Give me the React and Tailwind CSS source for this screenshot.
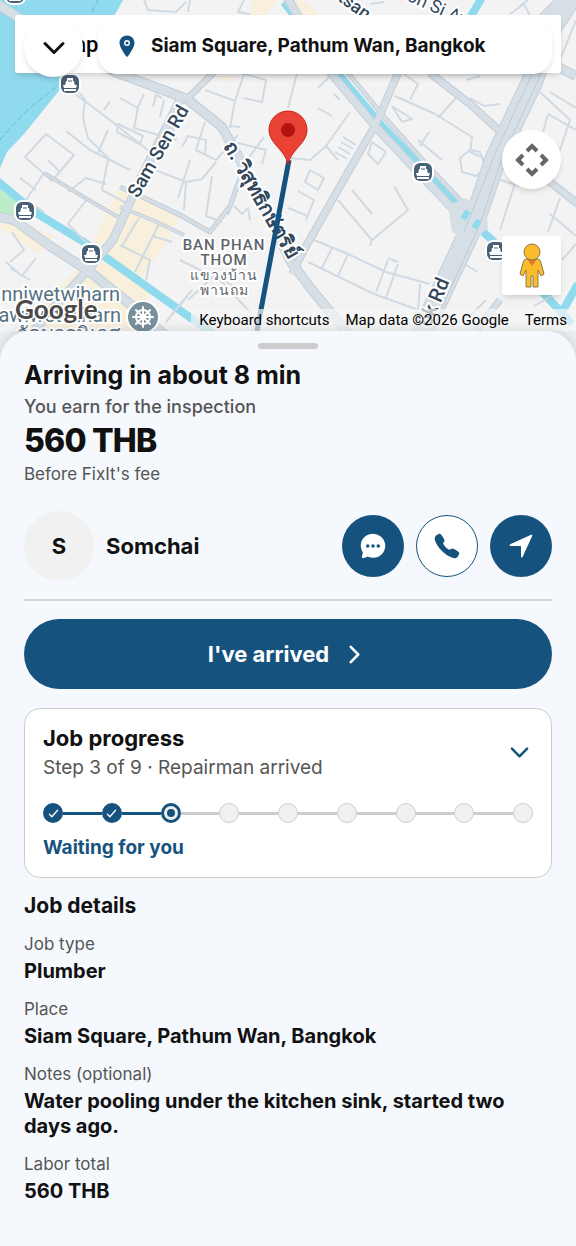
import {
    IoCall,
    IoChatbubbleEllipses,
    IoCheckmark,
    IoChevronDown,
    IoChevronForward,
    IoLocation,
    IoNavigate,
} from "react-icons/io5";

const TOTAL_STEPS = 9;
const CURRENT_STEP = 3;

const DETAILS = [
    { label: "Job type", value: "Plumber" },
    { label: "Place", value: "Siam Square, Pathum Wan, Bangkok" },
    { label: "Notes (optional)", value: "Water pooling under the kitchen sink, started two days ago." },
    { label: "Labor total", value: "560 THB" },
];

// Main roads, drawn as a casing plus a fill
const ROADS = [
    { d: "M-6 2 L30 25 L115 72 L187 99 L222 127 L243 165 L291 262 L312 290 L350 336", w: 9 },
    { d: "M187 99 L216 70", w: 6 },
    { d: "M180 100 L140 180 L113 240 L86 272 L55 306 L30 336", w: 8 },
    { d: "M120 187 L140 196 L180 215 L210 232 L230 206 L240 178", w: 4 },
    { d: "M44 173 L87 199 L120 218 M120 207 L150 219 L184 235", w: 3 },
    { d: "M-4 216 L14 220 L50 246 L90 272 L130 304 L166 336", w: 9 },
    { d: "M284 -8 L331 73 L375 126 L416 170 L456 212", w: 8 },
    { d: "M348 73 L385 118 L428 166 L464 204", w: 4 },
    { d: "M398 73 L376 124 L351 167 L305 248 L292 274", w: 7 },
    { d: "M430 73 L470 104 L502 133", w: 7 },
    { d: "M548 62 L576 76", w: 9 },
    { d: "M545 178 L578 204", w: 7 },
    { d: "M576 -10 L552 26 L532 82 L496 158 L474 222 L430 316 L420 340", w: 21 },
    { d: "M560 0 L530 30", w: 8 },
    { d: "M500 300 L476 331", w: 6 },
];

const SMALL_ROADS = [
    "M70 90 L110 120 L150 152 L148 175 M76 88 L85 100 L83 118 L88 138 L110 160",
    "M46 134 L25 157 L52 181 L74 155 Z M66 131 L90 150 L130 170 M108 130 L98 153",
    "M118 124 L143 136 L140 144 L117 132 Z M120 98 L138 108 L134 128 L176 140",
    "M137 109 L144 94 M153 107 L156 95 L162 98 M160 117 L164 100 M104 110 L110 101",
    "M182 147 L188 136 L206 140 L205 155 M205 122 L196 150 L216 160 L238 135",
    "M205 90 L235 101 L230 128 M235 101 L244 74 L266 80 L262 102 L244 98 M229 126 L240 127",
    "M238 143 L266 150 L262 164 M264 137 L240 170 M170 118 L176 140 M190 160 L178 198",
    "M44 173 L26 200 L44 212 M20 178 L36 190 M48 160 L60 172 M290 158 L310 160 L326 146",
    "M87 199 L68 224 L88 244 M68 192 L86 178 L106 184 M108 160 L102 190 L130 205",
    "M155 170 L186 182 L202 179 L216 162 M186 182 L184 210 M212 176 L206 216 L222 222",
    "M120 245 L150 260 L146 280 M139 218 L122 246 M160 222 L135 272 M152 236 L172 242",
    "M234 206 L242 214 L248 208 L250 220 M258 186 L272 196 M240 182 L228 215",
    "M180 260 L220 280 L250 312 M188 300 L215 275 L240 290",
    "M12 232 L24 250 L10 262 M36 258 L22 276 L6 262 M10 268 L30 280 M166 322 L192 290",
    "M144 0 L148 10 L176 12 L186 2 M190 0 L188 12 M300 62 L288 108 M244 0 L238 12 L250 14",
    "M330 76 L318 88 M340 100 L334 94 M350 112 L326 146 L338 160 M318 108 L332 116",
    "M343 137 L356 145 M341 142 L353 149 M338 147 L350 154 M335 152 L347 159",
    "M372 142 L386 152 L378 164 L368 154 Z M395 96 L435 114 L472 137 L470 152 L484 158",
    "M404 74 L418 84 L410 100 M438 118 L456 98 M418 140 L442 160 M429 132 L420 146",
    "M392 106 L412 119 L402 122 Z M470 150 L460 158 L462 172 L476 176 L486 168 L480 152 Z",
    "M470 98 L484 106 L500 104 M466 80 L480 76 M520 132 L560 150 L570 120 L540 92",
    "M550 92 L576 108 M548 114 L576 130 M548 114 L542 136 M516 180 L500 230 M500 180 L520 186",
    "M310 170 L324 178 L318 190 L305 182 Z M298 191 L314 200 L306 220 M288 208 L308 216",
    "M338 200 L372 240 L408 210 L394 186 M352 190 L372 214 M372 238 L370 246",
    "M314 240 L348 254 L386 272 L430 284 M308 262 L374 294 L424 312 M348 254 L338 276",
    "M388 260 L376 292 M398 264 L386 298 M388 258 L398 262 M332 248 L322 268 M420 284 L418 310",
    "M550 214 L576 236 M560 198 L548 232 M464 264 L478 272",
    "M486 300 L470 316 M534 306 L552 296 M562 260 L576 244 M576 20 L560 60",
    "M510 14 L524 4 L530 16 M528 0 L520 6 M370 4 L384 2",
];

const PIERS = [
    [15, -6],
    [70, 84],
    [25, 211],
    [91, 254],
    [423, 172],
    [496, 251],
];

function PierMark({ x, y }) {
    return (
        <g transform={`translate(${x} ${y})`}>
            <rect x="-11" y="-11" width="22" height="22" rx="8" fill="#fff" />
            <rect x="-9" y="-9" width="18" height="18" rx="6" fill="#486076" />
            <path
                d="M-3 -6 H3 V-3 H4 L5 2 H-5 L-4 -3 H-3 Z M-7 1 H7 L6 4 H-6 Z M-6 5 H6 V7 H-6 Z"
                fill="#fff"
            />
            <path d="M-2 -3 H2" stroke="#486076" strokeWidth="1" />
        </g>
    );
}

function MapCanvas() {
    return (
        <svg
            viewBox="0 0 576 331"
            preserveAspectRatio="xMidYMid slice"
            className="block h-full w-full"
            role="img"
            aria-label="Map"
        >
            <rect width="576" height="331" fill="#f4f3f4" />

            {/* commercial blocks */}
            <g fill="#f8f0dc">
                <path d="M118 189 L181 215 L162 250 L140 277 L106 255 L92 245 Z" />
                <path d="M0 220 L18 222 L54 236 L40 254 L0 228 Z" />
                <path d="M80 266 L108 262 L152 290 L140 310 L160 331 L20 331 L58 288 Z" />
                <path d="M252 0 L278 0 L262 20 L250 14 Z M288 0 L306 2 L318 14 L308 24 L290 10 Z" />
                <path d="M216 76 L236 76 L226 82 Z" />
            </g>
            <path d="M0 188 L19 204 L13 216 L0 214 Z" fill="#bdeccb" />

            {/* river and canals */}
            <path d="M0 0 H123 L112 20 L58 92 L24 134 L7 152 L0 168 Z" fill="#90daee" />
            <path d="M0 140 Q24 110 58 86 M92 12 L98 0" fill="none" stroke="#50bfdf" strokeDasharray="6 3" />
            <g fill="none" stroke="#90daee" strokeWidth="8">
                <path d="M-4 180 L36 213 L84 242 L108 259 L188 316 L214 334" />
                <path d="M284 2 L340 76 L382 126 L424 170 L464 214 L492 240 L548 298 L572 324" />
                <path d="M484 -6 L470 18 M578 284 L562 312" />
            </g>

            {/* side streets */}
            <g fill="none" stroke="#d0dae3" strokeWidth="2" strokeLinejoin="round">
                {SMALL_ROADS.map((d) => (
                    <path key={d} d={d} />
                ))}
            </g>

            {/* main roads */}
            <g fill="none" stroke="#c3ced8" strokeLinejoin="round">
                {ROADS.map((road) => (
                    <path key={road.d} d={road.d} strokeWidth={road.w + 1} />
                ))}
            </g>
            <g fill="none" stroke="#d6dfe6" strokeLinejoin="round">
                {ROADS.map((road) => (
                    <path key={road.d} d={road.d} strokeWidth={road.w - 1} />
                ))}
            </g>
            <path d="M448 206 L464 198 L486 206 L488 228 L472 242 L452 232 Z" fill="#d6dfe6" />
            <path d="M541 74 L502 158 L480 224 L437 318 M532 74 L495 154 L464 232" fill="none" stroke="#bfcbd6" />
            <path d="M463 219 L468 211 M474 228 L479 220" stroke="#90daee" strokeWidth="6" />

            {PIERS.map(([x, y]) => (
                <PierMark key={`${x}-${y}`} x={x} y={y} />
            ))}

            {/* labels */}
            <g
                className="font-['Roboto','Noto_Sans',sans-serif]"
                stroke="#fff"
                strokeWidth="4"
                strokeLinejoin="round"
                paintOrder="stroke"
            >
                <g fill="#33475b" fontSize="18" fontWeight="500">
                    <text transform="translate(138 199) rotate(-60)" fontSize="19">Sam Sen Rd</text>
                    <text transform="translate(223 146) rotate(60)" fontSize="20" fontWeight="700">
                        ถ. วิสุทธิกษัตริย์
                    </text>
                    <text transform="translate(430 328) rotate(-67)" fontSize="20">ok Rd</text>
                    <text transform="translate(337 0) rotate(36)">tsan</text>
                    <text transform="translate(406 0) rotate(24)" fontWeight="400">on Si Ayu</text>
                </g>
                <g fill="#5d656c" fontSize="14" fontWeight="500" textAnchor="middle" letterSpacing="1">
                    <text x="224" y="250" fontSize="15">BAN PHAN</text>
                    <text x="224" y="265" fontSize="15">THOM</text>
                    <text x="224" y="280">แขวงบ้าน</text>
                    <text x="224" y="295">พานถม</text>
                </g>
                <g fill="#587183" fontSize="20" textAnchor="end">
                    <text x="120" y="301">nniwetwiharn</text>
                    <text x="121" y="322">hawiwetwiharn</text>
                    <text x="121" y="341">วัดบวรนิเวศ</text>
                </g>
            </g>

            {/* temple */}
            <g transform="translate(143 317)">
                <circle r="17" fill="#fff" />
                <circle r="15" fill="#78909c" />
                <g fill="none" stroke="#fff" strokeWidth="2">
                    <circle r="7" />
                    <circle r="2" fill="#fff" />
                    <path d="M0 -10 V10 M-10 0 H10 M-7 -7 L7 7 M7 -7 L-7 7" strokeLinecap="round" />
                </g>
            </g>

            <text
                x="15"
                y="319"
                fontSize="26"
                fontWeight="700"
                fill="#4a4a4a"
                stroke="#fff"
                strokeWidth="3"
                paintOrder="stroke"
                className="font-['Lato',sans-serif]"
            >
                Google
            </text>

            {/* route and destination */}
            <path d="M289 160 L257 331" stroke="#15537e" strokeWidth="5" />
            <path
                d="M288 165 C286 150 269 144 269 130 A19 19 0 0 1 307 130 C307 144 290 150 288 165 Z"
                fill="#ea4335"
                stroke="#c5221f"
            />
            <circle cx="288" cy="130" r="7" fill="#b31412" />
        </svg>
    );
}

function JobMap() {
    return (
        <section className="relative h-[331px] overflow-hidden">
            <MapCanvas />

            <div className="absolute inset-x-[15px] top-[15px] flex h-[58px] items-center rounded-xs bg-white pl-10 font-['Roboto',sans-serif] text-[22px] font-medium text-black shadow-md">
                Map
            </div>

            <div className="absolute inset-x-6 top-[18px] flex items-start gap-[15px]">
                <button
                    type="button"
                    aria-label="Back"
                    className="flex size-[59px] shrink-0 items-center justify-center rounded-full bg-white shadow-md"
                >
                    <IoChevronDown size={32} />
                </button>
                <div className="flex h-14 flex-1 items-center gap-3 rounded-[20px] bg-white px-[17px] shadow-md">
                    <IoLocation size={24} className="text-[#15537e]" />
                    <span className="text-[19px] font-bold">Siam Square, Pathum Wan, Bangkok</span>
                </div>
            </div>

            <button
                type="button"
                aria-label="Map camera controls"
                className="absolute top-[130px] right-[15px] flex size-[59px] items-center justify-center rounded-full bg-white shadow-md"
            >
                <svg viewBox="0 0 36 36" className="size-9" fill="none" stroke="#666" strokeWidth="4">
                    <path d="M13 9 L18 4 L23 9 M27 13 L32 18 L27 23 M23 27 L18 32 L13 27 M9 23 L4 18 L9 13" />
                </svg>
            </button>

            <button
                type="button"
                aria-label="Drag Pegman onto the map to open Street View"
                className="absolute top-[236px] right-[15px] flex size-[59px] items-center justify-center rounded-xs bg-white shadow-md"
            >
                <svg viewBox="0 0 26 46" className="h-[46px] w-[26px]" stroke="#8a7a4a" strokeWidth="1">
                    <path
                        d="M7 16 H19 Q21 16 22 20 L25 31 L22 33 L19 27 V44 H14 V33 H12 V44 H7 V27 L4 33 L1 31 L4 20 Q5 16 7 16 Z"
                        fill="#fbbc2c"
                    />
                    <path d="M8 16 H18 L13 23 Z" fill="#e07a24" stroke="none" />
                    <circle cx="13" cy="9" r="8" fill="#fbbc2c" />
                </svg>
            </button>

            <div className="absolute right-0 bottom-0 flex h-[22px] items-center gap-4 bg-[#f5f5f5]/70 pr-[9px] pl-2 font-['Roboto',sans-serif] text-[15px] text-black">
                <button type="button">Keyboard shortcuts</button>
                <span>Map data ©2026 Google</span>
                <a href="#terms">Terms</a>
            </div>
        </section>
    );
}

function StepDot({ step }) {
    if (step < CURRENT_STEP) {
        return (
            <span className="flex size-5 shrink-0 items-center justify-center rounded-full bg-[#15537e] text-white">
                <IoCheckmark size={13} className="[&_path]:stroke-[52px]" />
            </span>
        );
    }
    if (step === CURRENT_STEP) {
        return (
            <span className="flex size-5 shrink-0 items-center justify-center rounded-full border-3 border-[#15537e] bg-[#f0f0f0]">
                <span className="size-2 rounded-full bg-[#15537e]" />
            </span>
        );
    }
    return <span className="size-5 shrink-0 rounded-full border border-[#cccccc] bg-[#f0f0f0]" />;
}

function JobProgress() {
    const steps = Array.from({ length: TOTAL_STEPS }, (_, i) => i + 1);

    return (
        <section className="mt-[19px] rounded-2xl border border-[#cccccc] bg-white px-[18px] pt-[15px] pb-4">
            <div className="flex items-center justify-between">
                <div>
                    <h2 className="text-[22px] leading-7 font-bold">Job progress</h2>
                    <p className="mt-1 text-[19px] leading-6 text-[#555]">Step 3 of 9 · Repairman arrived</p>
                </div>
                <button type="button" aria-label="Show all steps" className="text-[#15537e]">
                    <IoChevronDown size={27} />
                </button>
            </div>

            <div className="mt-[23px] flex items-center">
                {steps.map((step) => (
                    <div key={step} className={step === 1 ? "flex items-center" : "flex flex-1 items-center"}>
                        {step > 1 && (
                            <span className={`h-[3px] flex-1 ${step <= CURRENT_STEP ? "bg-[#15537e]" : "bg-[#cccccc]"}`} />
                        )}
                        <StepDot step={step} />
                    </div>
                ))}
            </div>

            <p className="mt-3 text-[19px] leading-[26px] font-bold text-[#15537e]">Waiting for you</p>
        </section>
    );
}

export default function App() {
    return (
        <main className="bg-[#e9edf0] font-['Inter','Liberation_Sans',sans-serif] text-[#111]">
            <JobMap />

            <div className="relative rounded-t-[30px] bg-[#f5f9fd] px-6 pt-3 pb-[42px] shadow-[0_-2px_8px_rgba(0,0,0,0.1)]">
                <div className="mx-auto h-[6px] w-[60px] rounded-full bg-[#cccccc]" />

                {/* Earnings */}
                <h1 className="mt-[10px] text-[25px] leading-8 font-bold">Arriving in about 8 min</h1>
                <p className="mt-1 text-lg leading-6 font-medium text-[#555]">You earn for the inspection</p>
                <p className="mt-1 text-[32px] leading-9 font-extrabold tracking-tight">560 THB</p>
                <p className="mt-[3px] text-[17px] leading-6 text-[#555]">Before FixIt's fee</p>

                {/* Customer */}
                <div className="mt-[25px] flex items-center gap-3 border-b-2 border-[#d5d8da] pb-[18px]">
                    <div className="flex size-[70px] items-center justify-center rounded-full bg-[#f1f1f1] text-[22px] font-bold">
                        S
                    </div>
                    <p className="flex-1 text-[22px] font-bold">Somchai</p>
                    <button
                        type="button"
                        aria-label="Message"
                        className="flex size-[62px] items-center justify-center rounded-full bg-[#15537e] text-white"
                    >
                        <IoChatbubbleEllipses size={28} />
                    </button>
                    <button
                        type="button"
                        aria-label="Call"
                        className="flex size-[62px] items-center justify-center rounded-full border border-[#15537e] bg-white text-[#15537e]"
                    >
                        <IoCall size={28} />
                    </button>
                    <button
                        type="button"
                        aria-label="Navigate"
                        className="flex size-[62px] items-center justify-center rounded-full bg-[#15537e] text-white"
                    >
                        <IoNavigate size={28} />
                    </button>
                </div>

                <button
                    type="button"
                    className="mt-[18px] flex h-[70px] w-full items-center justify-center gap-3 rounded-full bg-[#15537e] text-[22px] font-bold text-white"
                >
                    I've arrived
                    <IoChevronForward size={27} />
                </button>

                <JobProgress />

                {/* Details */}
                <h2 className="mt-[14px] text-[21px] leading-7 font-bold">Job details</h2>
                <dl className="mt-[13px] flex flex-col gap-[14px]">
                    {DETAILS.map(({ label, value }) => (
                        <div key={label}>
                            <dt className="text-[17px] leading-[22px] text-[#555]">{label}</dt>
                            <dd className="mt-1 text-xl leading-[25px] font-bold">{value}</dd>
                        </div>
                    ))}
                </dl>
            </div>
        </main>
    );
}
